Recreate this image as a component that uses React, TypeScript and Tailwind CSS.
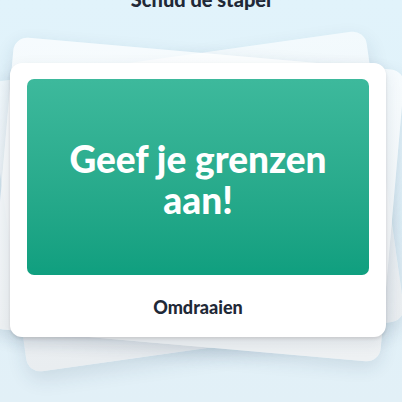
export default function App() {
  return (
    <div className="relative h-[402px] w-[402px] overflow-hidden bg-gradient-to-b from-[#e1f3fb] to-[#e2f0f7] font-['Lato','Liberation_Sans',sans-serif]">
      <h2 className="-mt-[15px] text-center text-[20px] font-black leading-[28px] text-[#1f2937]">
        Schud de stapel
      </h2>

      <div className="relative ml-[10px] mt-[50px] w-[376px]">
        {/* back of the stack */}
        <div className="absolute left-[-4px] top-[-8px] h-[293px] w-[381px] -rotate-[8deg] rounded-[14px] bg-gradient-to-b from-white/60 to-[#e9edf0] shadow-[0_8px_20px_rgba(30,60,90,0.12)]" />
        <div className="absolute left-[-9px] top-[-10px] h-[293px] w-[392px] rotate-[5deg] rounded-[14px] bg-gradient-to-b from-white/70 to-[#eef1f3] shadow-[0_6px_18px_rgba(30,60,90,0.12)]" />

        <div className="relative flex h-[274px] flex-col rounded-[12px] bg-white px-[17px] pt-4 shadow-[0_2px_3px_rgba(60,40,40,0.12),0_6px_16px_rgba(30,60,90,0.1)]">
          <div className="flex h-[196px] items-center justify-center rounded-[7px] bg-gradient-to-b from-[#3db99c] to-[#0f9f7f] px-6">
            <p className="pt-[3px] text-center text-[37px] font-black leading-[41px] text-white">
              Geef je grenzen aan!
            </p>
          </div>
          <div className="flex flex-1 items-center justify-center pt-[3px]">
            <span className="text-[18px] font-black text-[#1f2937]">Omdraaien</span>
          </div>
        </div>
      </div>
    </div>
  );
}
